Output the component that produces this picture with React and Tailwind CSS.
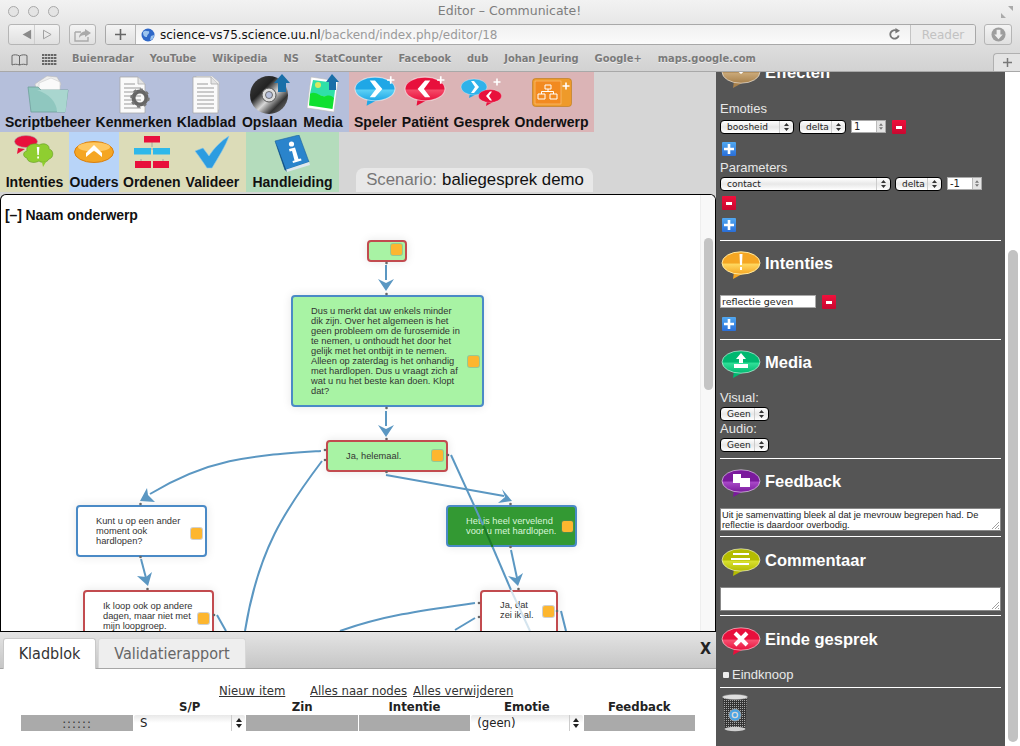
import React, { useId } from 'react';

// --- Drawn icons ---
const Bubble = ({ from, to, rim = '#ffffff88', className = 'w-[40px] h-[28px]', children }) => {
    const id = useId();
    return (
        <svg viewBox="0 0 40 28" className={className}>
            <defs>
                <linearGradient id={id} x1="0" y1="0" x2="0" y2="1">
                    <stop offset="0" stopColor={from} />
                    <stop offset="0.5" stopColor={from} />
                    <stop offset="0.55" stopColor={to} />
                    <stop offset="1" stopColor={from} />
                </linearGradient>
            </defs>
            <path d="M13 21 L12 28 L23 22 Z" fill={from} />
            <ellipse cx="20" cy="12" rx="19" ry="11.2" fill={`url(#${id})`} stroke={rim} strokeWidth="1" />
            {children}
        </svg>
    );
};

const ChevronR = () => <path d="M15 4 L20 4 L27 12 L20 20 L15 20 L21 12 Z" fill="#fff" />;
const ChevronL = () => <path d="M25 4 L20 4 L13 12 L20 20 L25 20 L19 12 Z" fill="#fff" />;
const TinyPlus = ({ x, y }) => (
    <path d={`M${x - 3.5} ${y} H${x + 3.5} M${x} ${y - 3.5} V${y + 3.5}`} stroke="#fff" strokeWidth="1.6" />
);

const Folder = () => (
    <svg viewBox="0 0 42 40" className="w-[42px] h-[40px]">
        <path d="M8 10 L20 2 L30 3 L34 10 L30 20 H10 Z" fill="#eeeeee" stroke="#bbb" strokeWidth="0.6" />
        <path d="M12 9 L24 4 L33 8 L33 20 H12 Z" fill="#fafafa" stroke="#ccc" strokeWidth="0.6" />
        <path d="M1 13 H11 L14 16 H41 L38 38 H4 Z" fill="#8fc7bf" stroke="#6f9f9a" strokeWidth="0.8" />
        <path d="M10 16 H41 L38.5 38 H30 C30 28 22 20 10 16 Z" fill="#a9d6cf" />
    </svg>
);

const PaperLines = () => (
    <>
        <path d="M3 1 H21 L28 8 V37 H3 Z" fill="#fafafa" stroke="#aaa" strokeWidth="0.8" />
        <path d="M21 1 V8 H28" fill="#e4e4e4" stroke="#aaa" strokeWidth="0.8" />
        <path d="M7 8 H18 M7 12 H24 M7 16 H24 M7 20 H24 M7 24 H24 M7 28 H24 M7 32 H24" stroke="#9a9a9a" strokeWidth="1" />
    </>
);

const DocGear = () => (
    <svg viewBox="0 0 34 38" className="w-[34px] h-[38px]">
        <PaperLines />
        <circle cx="23" cy="22" r="6.5" fill="none" stroke="#666" strokeWidth="4" />
        <circle cx="23" cy="22" r="8.5" fill="none" stroke="#777" strokeWidth="2.4" strokeDasharray="3 3.6" />
    </svg>
);

const Doc = () => (
    <svg viewBox="0 0 32 38" className="w-[32px] h-[38px]">
        <path d="M6 0 H22 L29 6 V34 H6 Z" fill="#eee" stroke="#bbb" strokeWidth="0.6" />
        <PaperLines />
    </svg>
);

const Disc = () => {
    const id = useId();
    return (
        <svg viewBox="0 0 42 40" className="w-[42px] h-[40px]">
            <defs>
                <linearGradient id={id} x1="0" y1="0" x2="1" y2="1">
                    <stop offset="0" stopColor="#444" />
                    <stop offset="0.35" stopColor="#222" />
                    <stop offset="0.55" stopColor="#d8d8d8" />
                    <stop offset="0.75" stopColor="#333" />
                    <stop offset="1" stopColor="#888" />
                </linearGradient>
            </defs>
            <circle cx="20" cy="21" r="19" fill={`url(#${id})`} />
            <circle cx="20" cy="21" r="7" fill="#ddd" stroke="#555" strokeWidth="1" />
            <circle cx="20" cy="21" r="3.5" fill="#b5bfdb" stroke="#555" strokeWidth="0.8" />
            <path d="M33 0 L41 9 H37 V18 H29 V9 H25 Z" fill="#1a6fa8" />
        </svg>
    );
};

const PictureUp = () => (
    <svg viewBox="0 0 34 40" className="w-[34px] h-[40px]">
        <path d="M5 3 L32 7 L28 38 L1 34 Z" fill="#fff" stroke="#bbb" strokeWidth="0.6" />
        <path d="M7 6 L30 9 L28 24 L4 20 Z" fill="#2fe0a8" />
        <path d="M4 20 C10 16 14 24 20 22 C24 21 26 22 28 24 L26.5 35 L3 31.5 Z" fill="#10e030" />
        <circle cx="12" cy="11" r="3" fill="#d8e860" />
        <path d="M26 0 L33 8 H30 V16 H23 V8 H20 Z" fill="#1a6fa8" />
    </svg>
);

const BubbleSpeler = () => (
    <Bubble from="#1fa7e6" to="#5cd0f5" className="w-[42px] h-[30px]"><ChevronR /><TinyPlus x={35} y={3.5} /></Bubble>
);
const BubblePatient = () => (
    <Bubble from="#e8103c" to="#f54a68" className="w-[42px] h-[30px]"><ChevronL /><TinyPlus x={35} y={3.5} /></Bubble>
);

const GesprekIcon = () => (
    <svg viewBox="0 0 44 30" className="w-[44px] h-[30px]">
        <path d="M10 16 L9 21 L17 17 Z" fill="#1fa7e6" />
        <ellipse cx="14" cy="10" rx="13" ry="8" fill="#2fb2ea" stroke="#ffffff88" strokeWidth="0.6" />
        <path d="M11 4 L14 4 L19 10 L14 16 L11 16 L15 10 Z" fill="#fff" />
        <path d="M27 24 L26 29 L33 25 Z" fill="#e8103c" />
        <ellipse cx="30" cy="19" rx="11.5" ry="6.5" fill="#e8103c" stroke="#ffffff66" strokeWidth="0.6" />
        <path d="M32 14.5 L30 14.5 L26 19 L30 23.5 L32 23.5 L29 19 Z" fill="#fff" />
        <TinyPlus x={37} y={5} />
    </svg>
);

const OnderwerpIcon = () => (
    <svg viewBox="0 0 40 30" className="w-[40px] h-[30px]">
        <rect x="0.5" y="0.5" width="39" height="28" rx="3" fill="#ee9a2a" stroke="#b87818" strokeWidth="0.6" />
        <rect x="3" y="3" width="26" height="23" fill="#f28a20" stroke="#ffd49a" strokeWidth="0.5" />
        <path d="M13 7 H19 V11 H13 Z M6 16 H13 V21 H6 Z M18 16 H25 V21 H18 Z M16 11 V13.5 M9.5 16 V13.5 H21.5 V16" fill="none" stroke="#fff" strokeWidth="1" />
        <TinyPlus x={34} y={8} />
    </svg>
);

const IntentiesIcon = () => (
    <svg viewBox="0 0 42 34" className="w-[42px] h-[34px]">
        <ellipse cx="13" cy="6.5" rx="11.5" ry="6" fill="#e8103c" stroke="#a8a8a8" strokeWidth="0.6" />
        <path d="M5 13 L4 19 L12 14 Z" fill="#e8103c" />
        <path d="M14 16 C12 10 22 7 26 10 C31 7 37 10 36 14 C41 15 41 23 36 24 C34 28 28 28 26 26 C21 29 14 27 14 23 C9 22 10 16 14 16 Z" fill="#8fce30" stroke="#5f9a20" strokeWidth="0.6" />
        <path d="M29 27 L30 32 L33 27 Z" fill="#8fce30" />
        <path d="M23.8 12 H26.4 L25.8 20 H24.4 Z M24.2 21.4 H26 V23.6 H24.2 Z" fill="#fff" />
    </svg>
);

const OudersIcon = () => (
    <svg viewBox="0 0 42 30" className="w-[42px] h-[30px]">
        <ellipse cx="21" cy="15" rx="19.5" ry="10.5" fill="#f5a623" stroke="#d97f10" strokeWidth="1" />
        <ellipse cx="21" cy="10" rx="16" ry="4.5" fill="#ffc862" />
        <path d="M21 8 L29 16 V20 L21 13.5 L13 20 V16 Z" fill="#fff" />
    </svg>
);

const OrdenenIcon = () => (
    <svg viewBox="0 0 38 34" className="w-[38px] h-[34px]">
        <path d="M19 7 V12 M8 18 V14 H30 V18 M8 24 V28 M30 24 V28" fill="none" stroke="#999" strokeWidth="0.8" />
        <rect x="11" y="1" width="16" height="6.5" fill="#e8103c" />
        <rect x="1" y="13" width="17" height="6.5" fill="#2fb8ea" />
        <rect x="20" y="13" width="17" height="6.5" fill="#2fb8ea" />
        <rect x="2" y="26" width="16" height="7" fill="#e8103c" />
        <rect x="20" y="26" width="16" height="7" fill="#e8103c" />
    </svg>
);

const CheckIcon = () => (
    <svg viewBox="0 0 36 34" className="w-[36px] h-[34px]">
        <path d="M1 16 L9 13 L15 21 C20 13 27 6 35 1 C32 10 24 23 18 33 L13 33 C9 27 5 21 1 16 Z" fill="#2c9ce0" stroke="#87c8ee" strokeWidth="0.6" />
    </svg>
);

const BookIcon = () => (
    <svg viewBox="0 0 38 38" className="w-[38px] h-[38px]">
        <path d="M1 6 L25 0 L35 27 L11 35 Z" fill="#2a84cc" stroke="#1d639e" strokeWidth="0.6" />
        <path d="M11 35 L35 27 L36 30 L13 37 Z" fill="#dfe8ee" />
        <path d="M1 6 L11 35 L13 37 L4 13 Z" fill="#14507f" />
        <circle cx="17.5" cy="9" r="2.6" fill="#fff" />
        <path d="M15 14 L21 12.5 L24.5 24 L27 23.5 L27.5 25.5 L19 28 L18.5 26 L20.5 25.4 L18 16 L15.6 16.6 Z" fill="#fff" />
    </svg>
);

// --- Toolbar ---
const ToolButton = ({ label, icon, iconClass = '', className = '' }) => (
    <div className={`flex flex-col items-center px-[2.5px] h-[60px] ${className}`}>
        <div className={`h-[42px] flex items-end justify-center ${iconClass}`}>{icon}</div>
        <span className="font-bold text-[14px] leading-[16px] text-[#111] whitespace-nowrap">{label}</span>
    </div>
);

const ChromeBtn = ({ className = '', children }) => (
    <div className={`h-[21px] flex items-center justify-center rounded-[3px] border border-[#b5b5b5] bg-gradient-to-b from-[#f4f4f4] to-[#e0e0e0] ${className}`}>{children}</div>
);

const BrowserChrome = () => (
    <div className="h-[72px] flex flex-col bg-gradient-to-b from-[#f2f2f2] to-[#d2d2d2] border-b border-[#a8a8a8] font-['DejaVu_Sans',sans-serif]">
        <div className="h-[23px] flex items-center pl-[8px] pr-[6px] relative">
            <div className="flex gap-[9px]">
                <span className="w-[11px] h-[11px] rounded-full border border-[#a9a9a9] bg-[#e4e4e4]" />
                <span className="w-[11px] h-[11px] rounded-full border border-[#a9a9a9] bg-[#e4e4e4]" />
                <span className="w-[11px] h-[11px] rounded-full border border-[#a9a9a9] bg-[#e4e4e4]" />
            </div>
            <span className="flex-1 text-center text-[12.5px] text-[#7d7d7d] pr-[40px] font-['DejaVu_Sans',sans-serif]">Editor – Communicate!</span>
            <svg viewBox="0 0 14 14" className="w-[14px] h-[14px] text-[#aaa]">
                <path d="M8 1 H13 V6 Z M1 8 V13 H6 Z" fill="currentColor" />
            </svg>
        </div>
        <div className="h-[23px] flex items-center pl-[8px] pr-[8px]">
            <ChromeBtn className="w-[52px]">
                <svg viewBox="0 0 52 20" className="w-[52px] h-[19px]">
                    <path d="M14 10 L23 5 V15 Z" fill="#8a8a8a" />
                    <path d="M26.5 0 V20" stroke="#ccc" />
                    <path d="M44 10 L36 5.5 V14.5 Z" fill="none" stroke="#9d9d9d" />
                </svg>
            </ChromeBtn>
            <ChromeBtn className="w-[27px] ml-[9px]">
                <svg viewBox="0 0 18 14" className="w-[18px] h-[14px]">
                    <path d="M1 4 H7 M1 4 V13 H14 V9" fill="none" stroke="#aaa" strokeWidth="1.4" />
                    <path d="M11 1 L17 5 L11 9 V7 C8 7 6 8 5 10 C5 6 8 3.5 11 3.2 Z" fill="#aaa" />
                </svg>
            </ChromeBtn>
            <div className="ml-[9px] flex-1 h-[21px] flex rounded-[3px] border border-[#a8a8a8] overflow-hidden">
                <div className="w-[30px] flex items-center justify-center bg-gradient-to-b from-[#f4f4f4] to-[#e0e0e0] border-r border-[#b5b5b5]">
                    <svg viewBox="0 0 11 11" className="w-[11px] h-[11px]"><path d="M5.5 0 V11 M0 5.5 H11" stroke="#666" strokeWidth="1.6" /></svg>
                </div>
                <div className="flex-1 flex items-center bg-gradient-to-b from-[#f0f0f0] to-[#fbfbfb] pl-[5px]">
                    <svg viewBox="0 0 14 14" className="w-[14px] h-[14px]">
                        <circle cx="7" cy="7" r="6.5" fill="#2f68c8" />
                        <path d="M2 4 C5 1 6 4 8 3 C9 6 6 6 6 9 C3 9 2 7 2 4 Z M10 8 L13 7 C13 10 11 12 9 12 Z" fill="#9cc4ee" />
                    </svg>
                    <span className="ml-[5px] text-[12px] text-[#111] whitespace-nowrap">science-vs75.science.uu.nl<span className="text-[#9a9a9a]">/backend/index.php/editor/18</span></span>
                    <svg viewBox="0 0 14 14" className="ml-auto mr-[9px] w-[13px] h-[13px]">
                        <path d="M11.5 8 A4.6 4.6 0 1 1 9.5 3" fill="none" stroke="#777" strokeWidth="2" />
                        <path d="M8 0 L13 3 L8 6 Z" fill="#777" />
                    </svg>
                </div>
                <div className="w-[65px] flex items-center justify-center bg-[#ececec] border-l border-[#c4c4c4] text-[12px] text-[#c2c2c2]">Reader</div>
            </div>
            <ChromeBtn className="w-[28px] ml-[8px]">
                <svg viewBox="0 0 16 16" className="w-[15px] h-[15px]">
                    <circle cx="8" cy="8" r="7.5" fill="#9d9d9d" />
                    <path d="M6 3 H10 V8 H12.5 L8 13 L3.5 8 H6 Z" fill="#eee" />
                </svg>
            </ChromeBtn>
        </div>
        <div className="flex-1 flex items-center pt-[2px] pl-[11px] relative text-[9.9px] font-bold text-[#7a7a7a] [text-shadow:0_1px_0_#eee]">
            <svg viewBox="0 0 17 12" className="w-[17px] h-[12px]">
                <path d="M8.5 2 C6 0.5 3 0.5 1 1.5 V11 C3 10 6 10 8.5 11 C11 10 14 10 16 11 V1.5 C14 0.5 11 0.5 8.5 2 Z M8.5 2 V11" fill="none" stroke="#666" strokeWidth="1" />
            </svg>
            <svg viewBox="0 0 15 11" className="ml-[14px] w-[15px] h-[11px]">
                <path d="M0 1 H15 M0 4 H15 M0 7 H15 M0 10 H15" stroke="#666" strokeWidth="2" strokeDasharray="2.4 0.6" />
            </svg>
            <div className="ml-[15px] flex gap-[16px] whitespace-nowrap">
                <span>Buienradar</span>
                <span>YouTube</span>
                <span>Wikipedia</span>
                <span>NS</span>
                <span>StatCounter</span>
                <span>Facebook</span>
                <span>dub</span>
                <span>Johan Jeuring</span>
                <span>Google+</span>
                <span>maps.google.com</span>
            </div>
            <div className="absolute right-0 bottom-0 w-[27px] h-[18px] rounded-tl-[4px] border border-b-0 border-r-0 border-[#b0b0b0] bg-[#e4e4e4] flex items-center justify-center">
                <svg viewBox="0 0 9 9" className="w-[9px] h-[9px]"><path d="M4.5 0 V9 M0 4.5 H9" stroke="#777" strokeWidth="1.5" /></svg>
            </div>
        </div>
    </div>
);

const Toolbar = () => (
    <div className="font-['Liberation_Sans',sans-serif]">
        <div className="flex h-[60px]">
            <div className="w-[349px] bg-[#b5bfdb] flex pl-[2.5px]">
                <ToolButton label="Scriptbeheer" icon={<Folder />} />
                <ToolButton label="Kenmerken" icon={<DocGear />} />
                <ToolButton label="Kladblad" icon={<Doc />} />
                <ToolButton label="Opslaan" icon={<Disc />} className="ml-[1px]" />
                <ToolButton label="Media" icon={<PictureUp />} className="ml-[1px]" />
            </div>
            <div className="w-[245px] bg-[#dbb4b6] flex pl-[2.5px]">
                <ToolButton label="Speler" icon={<BubbleSpeler />} iconClass="pb-[8px]" />
                <ToolButton label="Patiënt" icon={<BubblePatient />} iconClass="pb-[8px]" />
                <ToolButton label="Gesprek" icon={<GesprekIcon />} iconClass="pb-[7px]" />
                <ToolButton label="Onderwerp" icon={<OnderwerpIcon />} iconClass="pb-[6px]" />
            </div>
        </div>
        <div className="flex h-[60px] items-stretch">
            <div className="w-[69px] bg-[#dcdcb8] flex justify-center"><ToolButton label="Intenties" icon={<IntentiesIcon />} iconClass="pb-[5px]" /></div>
            <div className="w-[50px] bg-[#b8d4f8] flex justify-center"><ToolButton label="Ouders" icon={<OudersIcon />} iconClass="pb-[7px]" /></div>
            <div className="w-[127px] bg-[#dcdcb8] flex pl-[1.5px]">
                <ToolButton label="Ordenen" icon={<OrdenenIcon />} iconClass="pb-[5px]" />
                <ToolButton label="Valideer" icon={<CheckIcon />} iconClass="pb-[5px]" />
            </div>
            <div className="w-[93px] bg-[#b4dcbc] flex justify-center"><ToolButton label="Handleiding" icon={<BookIcon />} iconClass="pb-[1px]" /></div>
            <div className="ml-[17px] mt-[36px] h-[24px] w-[237px] rounded-t-[8px] bg-[#e8e8e8] flex items-center justify-center pl-[1px] text-[16.8px] whitespace-nowrap">
                <span className="text-[#777]">Scenario:</span>
                <span className="ml-[5px] text-[#111]">baliegesprek demo</span>
            </div>
        </div>
    </div>
);

// --- Diagram ---
const Flag = ({ className }) => (
    <span className={`absolute w-[11px] h-[11px] rounded-[2px] bg-[#fdb62f] shadow-[0_0_0_1px_rgba(120,120,120,0.35)] ${className}`} />
);

const nodeText = "absolute text-[9.3px] leading-[10px] text-[#333] font-['Liberation_Sans',sans-serif]";

const Canvas = () => (
    <div className="relative h-[437px] mt-[2px] rounded-t-[6px] border border-b-0 border-black bg-white overflow-hidden">
        <p className="absolute left-[4px] top-[12px] text-[14px] leading-[16px] tracking-[-0.1px] font-bold text-[#111] font-['Liberation_Sans',sans-serif]">[–] Naam onderwerp</p>

        {/* node 1 */}
        <div className="absolute left-[366px] top-[45px] w-[40px] h-[22px] rounded-[4px] border-2 border-[#c24b4f] bg-[#a8f3a4] shadow-[0_0_10px_rgba(0,0,0,0.1)]">
            <Flag className="left-[22px] top-[2px]" />
        </div>
        {/* node 2 */}
        <div className="absolute left-[290px] top-[100px] w-[193px] h-[112px] rounded-[4px] border-2 border-[#4a8ac6] bg-[#a8f3a4] shadow-[0_0_10px_rgba(0,0,0,0.1)]">
            <div className={`${nodeText} left-[18px] top-[9px] w-[153px]`}>Dus u merkt dat uw enkels minder<br />dik zijn. Over het algemeen is het<br />geen probleem om de furosemide in<br />te nemen, u onthoudt het door het<br />gelijk met het ontbijt in te nemen.<br />Alleen op zaterdag is het onhandig<br />met hardlopen. Dus u vraagt zich af<br />wat u nu het beste kan doen. Klopt<br />dat?</div>
            <Flag className="left-[175px] top-[59px]" />
        </div>
        {/* node 3 */}
        <div className="absolute left-[325px] top-[245px] w-[122px] h-[32px] rounded-[4px] border-2 border-[#c24b4f] bg-[#a8f3a4] shadow-[0_0_10px_rgba(0,0,0,0.1)]">
            <div className={`${nodeText} left-[18px] top-[9px]`}>Ja, helemaal.</div>
            <Flag className="left-[104px] top-[8px]" />
        </div>
        {/* node 4 */}
        <div className="absolute left-[75px] top-[310px] w-[131px] h-[52px] rounded-[4px] border-2 border-[#4a8ac6] bg-white shadow-[0_0_10px_rgba(0,0,0,0.1)]">
            <div className={`${nodeText} left-[18px] top-[9px] w-[92px]`}>Kunt u op een ander moment ook hardlopen?</div>
            <Flag className="left-[113px] top-[21px]" />
        </div>
        {/* node 5 */}
        <div className="absolute left-[82px] top-[395px] w-[131px] h-[62px] rounded-[4px] border-2 border-[#c24b4f] bg-white shadow-[0_0_10px_rgba(0,0,0,0.1)]">
            <div className={`${nodeText} left-[18px] top-[9px] w-[96px]`}>Ik loop ook op andere dagen, maar niet met mijn loopgroep.</div>
            <Flag className="left-[113px] top-[21px]" />
        </div>
        {/* node 6 */}
        <div className="absolute left-[445px] top-[310px] w-[131px] h-[42px] rounded-[4px] border-2 border-[#4a8ac6] bg-[#339933] shadow-[0_0_10px_rgba(0,0,0,0.1)]">
            <div className={`${nodeText} !text-[#d8f5d8] left-[18px] top-[9px] w-[96px]`}>Het is heel vervelend voor u met hardlopen.</div>
            <Flag className="left-[114px] top-[14px]" />
        </div>
        {/* node 7 */}
        <div className="absolute left-[479px] top-[395px] w-[78px] h-[62px] rounded-[4px] border-2 border-[#c24b4f] bg-white shadow-[0_0_10px_rgba(0,0,0,0.1)]">
            <div className={`${nodeText} left-[18px] top-[8px] w-[42px]`}>Ja, dat zei ik al.</div>
            <Flag className="left-[61px] top-[14px]" />
        </div>

        {/* connectors, in page coordinates */}
        <svg viewBox="1 195 716 437" className="absolute left-0 top-0 w-[716px] h-[437px]">
            <g fill="none" stroke="#5b97c2" strokeWidth="2">
                <path d="M386 265 V280" />
                <path d="M386 411 V426" />
                <path d="M321 451 C250 456 210 458 150 494" />
                <path d="M322 461 C285 510 258 550 245 631" />
                <path d="M386 475 L504 496" />
                <path d="M451 455 L483 525" />
                <path d="M511 550 L517 578" />
                <path d="M475 603 C425 610 385 615 340 631" />
                <path d="M475 618 L455 630" />
                <path d="M561 611 L566 631" />
                <path d="M141 559 L146 578" />
                <path d="M217 615 L226 631" />
                <path d="M483.5 526 L492.6 547" stroke="#1d7a2a" />
                <path d="M492.6 547 L511 590" />
                <path d="M511 590 L530 631" stroke="#d4e4ee" />
            </g>
            <g fill="#5b97c2">
                <path d="M378 279 L386 283 L394 279 L386 291 Z" />
                <path d="M378 425 L386 429 L394 425 L386 437 Z" />
                <path d="M147 488 L148 495 L155 502 L140 501 Z" />
                <path d="M502 489 L505 497 L498 503 L512 501 Z" />
                <path d="M508 576 L516 578 L523 573 L518 586 Z" />
                <path d="M137 576 L146 577 L152 572 L148 586 Z" />
            </g>
            <g fill="#666">
                <circle cx="386.5" cy="263" r="1.3" /><circle cx="386.5" cy="294" r="1.3" />
                <circle cx="386.5" cy="408" r="1.3" /><circle cx="386.5" cy="439" r="1.3" />
                <circle cx="325" cy="450" r="1.3" /><circle cx="325" cy="460" r="1.3" />
                <circle cx="386.5" cy="472" r="1.3" /><circle cx="448" cy="455" r="1.3" />
                <circle cx="140.5" cy="504" r="1.3" /><circle cx="140.5" cy="557" r="1.3" />
                <circle cx="147.5" cy="589" r="1.3" /><circle cx="214" cy="615" r="1.3" />
                <circle cx="510.5" cy="504" r="1.3" /><circle cx="510.5" cy="547" r="1.3" />
                <circle cx="518.5" cy="589" r="1.3" /><circle cx="479" cy="603" r="1.3" />
                <circle cx="479" cy="617" r="1.3" /><circle cx="557" cy="611" r="1.3" />
            </g>
        </svg>

        {/* inner scrollbar */}
        <div className="absolute right-0 top-0 bottom-0 w-[15px] bg-[#f8f8f8] border-l border-[#eeeeee]">
            <div className="ml-[3px] mt-[43px] w-[9px] h-[152px] rounded-full bg-[#c4c4c4]" />
        </div>
    </div>
);

// --- Kladblok panel ---
const condensed = "font-['DejaVu_Sans',sans-serif] [font-stretch:condensed]";

const Cell = ({ children }) => (
    <div className="h-[16px] bg-[#aaaaaa] flex items-center justify-center text-[13px] tracking-[1px] text-[#333] leading-none">{children}</div>
);

const Updown = () => (
    <svg viewBox="0 0 6 10" className="w-[6px] h-[10px]"><path d="M3 0 L6 4 H0 Z M3 10 L0 6 H6 Z" fill="#222" /></svg>
);

const SelectCell = ({ children }) => (
    <div className="h-[16px] rounded-[2px] bg-gradient-to-b from-[#e8e8e8] via-white to-white flex items-center pl-[6px] text-[13px] text-[#222]">
        <span className="flex-1">{children}</span>
        <span className="w-[14px] h-full border-l border-[#ccc] flex items-center justify-center">
            <Updown />
        </span>
    </div>
);

const BottomPanel = () => (
    <div className={`h-[115px] bg-white border-t border-black ${condensed}`}>
        <div className="h-[37px] flex items-end pl-[3px] gap-[2px] bg-gradient-to-b from-[#e4e4e4] to-[#c6c6c6] border-b border-[#a6a6a6] relative">
            <div className="w-[93px] h-[31px] -mb-[1px] rounded-t-[3px] border border-b-0 border-[#c8c8c8] bg-white flex items-center justify-center text-[16px] text-[#333]">Kladblok</div>
            <div className="w-[148px] h-[30px] rounded-t-[3px] border border-b-0 border-[#d8d8d8] bg-[#eeeeee] flex items-center justify-center text-[16px] text-[#666]">Validatierapport</div>
            <span className="absolute right-[5px] top-[5px] text-[16px] font-bold text-[#222]">X</span>
        </div>
        <div className="pt-[14px] pl-[21px] w-[695px]">
            <div className="flex pl-[198px] text-[13px] leading-[16px] text-[#333] underline whitespace-nowrap">
                <span className="w-[68px]">Nieuw item</span>
                <span className="ml-[23px]">Alles naar nodes</span>
                <span className="ml-[6px]">Alles verwijderen</span>
            </div>
            <div className="grid grid-cols-[112px_repeat(5,1fr)] gap-x-[1px] text-[13px] leading-[16px] font-bold text-[#222] text-center">
                <span />
                <span>S/P</span>
                <span>Zin</span>
                <span>Intentie</span>
                <span>Emotie</span>
                <span>Feedback</span>
            </div>
            <div className="grid grid-cols-[112px_repeat(5,1fr)] gap-x-[1px]">
                <Cell>::::::</Cell>
                <SelectCell>S</SelectCell>
                <Cell />
                <Cell />
                <SelectCell>(geen)</SelectCell>
                <Cell />
            </div>
        </div>
    </div>
);

// --- Sidebar ---
const AquaSelect = ({ className, children }) => (
    <div className={`h-[14px] flex items-center rounded-[4px] border border-black bg-gradient-to-b from-white via-[#e8e8e8] to-white text-[9px] text-[#222] font-['DejaVu_Sans',sans-serif] ${className}`}>
        <span className="flex-1 pl-[6px] leading-none">{children}</span>
        <span className="w-[14px] h-full border-l border-[#ccc] flex items-center justify-center">
            <svg viewBox="0 0 5 8" className="w-[5px] h-[8px]"><path d="M2.5 0 L5 3 H0 Z M2.5 8 L0 5 H5 Z" fill="#333" /></svg>
        </span>
    </div>
);

const NumberBox = ({ className, children }) => (
    <div className={`h-[13px] flex items-center bg-white border border-[#aaa] text-[10px] text-[#222] font-['DejaVu_Sans',sans-serif] ${className}`}>
        <span className="flex-1 pl-[2px] leading-none">{children}</span>
        <span className="w-[9px] h-full bg-[#e4e4e4] border-l border-[#bbb] flex items-center justify-center">
            <svg viewBox="0 0 5 8" className="w-[4px] h-[7px]"><path d="M2.5 0 L5 3 H0 Z M2.5 8 L0 5 H5 Z" fill="#777" /></svg>
        </span>
    </div>
);

const SquareBtn = ({ kind, className = '' }) => (
    <div className={`w-[14px] h-[14px] rounded-[1px] flex items-center justify-center ${kind === 'plus' ? 'bg-gradient-to-b from-[#52a8f0] to-[#2a6ed8]' : 'bg-gradient-to-b from-[#f0103c] to-[#c80830]'} ${className}`}>
        {kind === 'plus'
            ? <svg viewBox="0 0 10 10" className="w-[10px] h-[10px]"><path d="M5 0 V10 M0 5 H10" stroke="#fff" strokeWidth="2.6" /></svg>
            : <span className="w-[6px] h-[3px] bg-white" />}
    </div>
);

const Hr = ({ className = '' }) => <div className={`h-[1px] bg-white ${className}`} />;

const Heading = ({ icon, children }) => (
    <div className="flex items-center h-[28px] pl-[1px]">
        {icon}
        <span className="ml-[4px] -mt-[4px] text-[16.5px] font-bold text-white">{children}</span>
    </div>
);

const Grip = () => (
    <svg viewBox="0 0 8 8" className="absolute right-[1px] bottom-[1px] w-[8px] h-[8px]"><path d="M8 1 L1 8 M8 4 L4 8 M8 7 L7 8" stroke="#777" strokeWidth="0.7" /></svg>
);

const Trash = () => {
    const id = useId();
    return (
        <svg viewBox="0 0 26 38" className="w-[26px] h-[38px]">
            <defs>
                <pattern id={id} width="2" height="2" patternUnits="userSpaceOnUse">
                    <rect width="2" height="2" fill="#333" />
                    <rect width="1" height="1" fill="#a8a8a8" />
                </pattern>
            </defs>
            <path d="M1 3 L3 36 H23 L25 3 Z" fill={`url(#${id})`} />
            <ellipse cx="13" cy="3" rx="12.5" ry="2.6" fill="#dedede" stroke="#999" strokeWidth="0.5" />
            <ellipse cx="13" cy="35" rx="10.5" ry="2.2" fill="#cfcfcf" />
            <circle cx="13" cy="21" r="6" fill="#4aa4e4" stroke="#a8a8a8" strokeWidth="0.8" />
            <circle cx="13" cy="21" r="2.6" fill="none" stroke="#d8d8d8" strokeWidth="1.4" />
        </svg>
    );
};

const Sidebar = () => (
    <div className="w-[304px] h-full flex bg-white font-['Liberation_Sans',sans-serif] text-[13px] text-[#e8e8e8]">
        <div className="w-[289px] h-full bg-[#555555] overflow-hidden px-[4px]">
            <div className="-mt-[12px] mb-[13px]">
                <Heading icon={
                    <Bubble from="#a8814c" to="#c9a878">
                        <path d="M20 4 L26 9 L20 14 L14 9 Z" fill="#fff" />
                    </Bubble>
                }>Effecten</Heading>
            </div>
            <div className="leading-[15px]">Emoties</div>
            <div className="flex items-start mt-[4px]">
                <AquaSelect className="w-[74px]">boosheid</AquaSelect>
                <AquaSelect className="w-[47px] ml-[5px]">delta</AquaSelect>
                <NumberBox className="w-[35px] ml-[5px]">1</NumberBox>
                <SquareBtn kind="minus" className="ml-[6px]" />
            </div>
            <SquareBtn kind="plus" className="mt-[8px] ml-[2px]" />
            <div className="leading-[15px] mt-[4px]">Parameters</div>
            <div className="flex items-start mt-[2px]">
                <AquaSelect className="w-[171px]">contact</AquaSelect>
                <AquaSelect className="w-[47px] ml-[4px]">delta</AquaSelect>
                <NumberBox className="w-[35px] ml-[5px]">-1</NumberBox>
            </div>
            <SquareBtn kind="minus" className="mt-[5px] ml-[2px]" />
            <SquareBtn kind="plus" className="mt-[8px] ml-[2px]" />
            <Hr className="mt-[8px]" />

            <div className="mt-[10px]">
                <Heading icon={
                    <Bubble from="#f5a623" to="#ffd860" rim="#ffe9a0">
                        <path d="M18.5 3 H21.5 L21 14 H19 Z M19 16 H21 V19 H19 Z" fill="#fff" />
                    </Bubble>
                }>Intenties</Heading>
            </div>
            <div className="flex items-start mt-[16px]">
                <div className="w-[96px] h-[13px] bg-white border border-[#aaa] text-[9.5px] leading-[11px] text-[#222] pl-[1px] font-['DejaVu_Sans',sans-serif]">reflectie geven</div>
                <SquareBtn kind="minus" className="ml-[6px]" />
            </div>
            <SquareBtn kind="plus" className="mt-[8px] ml-[2px]" />
            <Hr className="mt-[8px]" />

            <div className="mt-[10px]">
                <Heading icon={
                    <Bubble from="#00b870" to="#30e098">
                        <path d="M20 3 L25 9 H22 V13 H18 V9 H15 Z M13 14 H27 V18 H13 Z" fill="#fff" />
                    </Bubble>
                }>Media</Heading>
            </div>
            <div className="leading-[15px] mt-[12px]">Visual:</div>
            <AquaSelect className="w-[49px] mt-[2px]">Geen</AquaSelect>
            <div className="leading-[15px]">Audio:</div>
            <AquaSelect className="w-[49px] mt-[2px]">Geen</AquaSelect>
            <Hr className="mt-[6px]" />

            <div className="mt-[10px]">
                <Heading icon={
                    <Bubble from="#7a1a9c" to="#a848c8">
                        <path d="M12 5 H20 V9 H29 V18 H19 V14 H12 Z" fill="#fff" />
                    </Bubble>
                }>Feedback</Heading>
            </div>
            <div className="relative h-[23px] mt-[11px] bg-white border border-[#888] text-[9.3px] leading-[10px] text-[#222] px-[1px] pt-[1px]">
                Uit je samenvatting bleek al dat je mevrouw begrepen had. De reflectie is daardoor overbodig.
                <Grip />
            </div>
            <Hr className="mt-[5px]" />

            <div className="mt-[11px]">
                <Heading icon={
                    <Bubble from="#b4bc00" to="#d8e030">
                        <path d="M12 6 H28 M10 11 H29 M12 16 H28" stroke="#fff" strokeWidth="2" />
                    </Bubble>
                }>Commentaar</Heading>
            </div>
            <div className="relative h-[24px] mt-[11px] bg-white border border-[#888]"><Grip /></div>
            <Hr className="mt-[4px]" />

            <div className="mt-[11px]">
                <Heading icon={
                    <Bubble from="#e8103c" to="#f85070">
                        <path d="M14 6 L26 18 M26 6 L14 18" stroke="#fff" strokeWidth="4" />
                    </Bubble>
                }>Einde gesprek</Heading>
            </div>
            <div className="flex items-center mt-[12px] h-[15px] pl-[3px]">
                <span className="w-[6px] h-[6px] rounded-[1px] bg-[#eeeeee]" />
                <span className="ml-[3px]">Eindknoop</span>
            </div>
            <Hr className="mt-[5px]" />
            <div className="mt-[6px] ml-[2px]"><Trash /></div>
        </div>
        <div className="w-[15px] h-full pt-[178px] pl-[3px]">
            <div className="w-[10px] h-[492px] rounded-full bg-[#c2c2c2]" />
        </div>
    </div>
);

export default function App() {
    return (
        <div className="w-[1020px] h-[746px] overflow-hidden bg-[#d6d6d6] flex flex-col">
            <BrowserChrome />
            <div className="flex h-[674px]">
                <div className="w-[716px] flex flex-col">
                    <Toolbar />
                    <Canvas />
                    <BottomPanel />
                </div>
                <Sidebar />
            </div>
        </div>
    );
}
